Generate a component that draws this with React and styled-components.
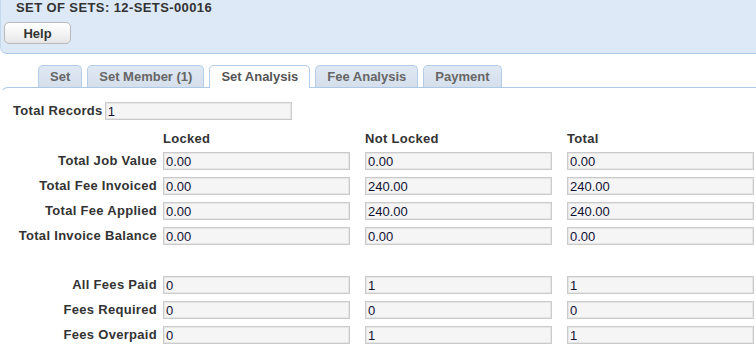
import React from "react";
import styled, { createGlobalStyle } from "styled-components";

const GlobalStyle = createGlobalStyle`
  html, body {
    margin: 0;
    padding: 0;
    background: #ffffff;
    font-family: "Liberation Sans", Arial, sans-serif;
  }
`;

const Header = styled.div`
  background-color: #dde9f6;
  border-bottom: 1px solid #adc9e7;
  border-left: 1px solid #c4d8ee;
  border-bottom-left-radius: 7px;
  padding: 0 0 9px 3px;
`;

const Title = styled.div`
  font-size: 13px;
  font-weight: bold;
  line-height: 16px;
  letter-spacing: 0.4px;
  color: #333;
  padding-left: 12px;
`;

const HelpButton = styled.button`
  display: block;
  margin-top: 6px;
  width: 67px;
  height: 22px;
  padding: 0;
  border: 1px solid #b9b9b9;
  border-radius: 5px;
  background: linear-gradient(#ffffff, #f2f2f2 60%, #e6e6e6);
  font-family: "Liberation Sans", Arial, sans-serif;
  font-size: 13px;
  font-weight: bold;
  color: #333;
`;

const TabBar = styled.div`
  display: flex;
  gap: 5px;
  padding-left: 38px;
  margin-top: 11px;
`;

const Tab = styled.div`
  padding: 1px 11px 0;
  border: 1px solid #b3cde8;
  border-bottom: none;
  border-radius: 5px 5px 0 0;
  background: ${(p) => (p.$active ? "#ffffff" : "linear-gradient(#dfe8f3, #d5dfeb)")};
  font-size: 13px;
  font-weight: bold;
  line-height: 20px;
  color: ${(p) => (p.$active ? "#555" : "#666")};
  margin-bottom: ${(p) => (p.$active ? "-1px" : "0")};
  height: ${(p) => (p.$active ? "21px" : "20px")};
  position: relative;
  z-index: 1;
`;

const Panel = styled.div`
  border-top: 1px solid #adc9e7;
  border-left: 1px solid transparent;
  border-top-left-radius: 8px;
  padding-top: 14px;
`;

const RecordsRow = styled.div`
  display: flex;
  align-items: center;
  gap: 2px;
  padding-left: 12px;
`;

const Label = styled.div`
  font-size: 13px;
  font-weight: bold;
  color: #333;
  line-height: 18px;
  letter-spacing: 0.3px;
  white-space: nowrap;
  text-align: ${(p) => (p.$right ? "right" : "left")};
  padding-right: ${(p) => (p.$right ? "6px" : "0")};
`;

const Field = styled.input`
  box-sizing: border-box;
  width: 187px;
  height: 18px;
  margin: 0;
  padding: 0 2px;
  border: 1px solid #cbcbcb;
  box-shadow: inset 0 0 0 1px #e6e6e6;
  background: #f5f5f5;
  font-family: "Liberation Sans", Arial, sans-serif;
  font-size: 13px;
  color: #111133;
  outline: none;
`;

const Grid = styled.div`
  display: grid;
  grid-template-columns: 162px 202px 202px 187px;
  row-gap: 7px;
  margin-top: 11px;
`;

const ColHead = styled.div`
  font-size: 13px;
  font-weight: bold;
  color: #333;
  line-height: 16px;
  letter-spacing: 0.3px;
  margin-bottom: -2px;
`;

const Spacer = styled.div`
  grid-column: 1 / -1;
  height: 17px;
`;

const tabs = ["Set", "Set Member (1)", "Set Analysis", "Fee Analysis", "Payment"];

const rowsA = [
  ["Total Job Value", "0.00", "0.00", "0.00"],
  ["Total Fee Invoiced", "0.00", "240.00", "240.00"],
  ["Total Fee Applied", "0.00", "240.00", "240.00"],
  ["Total Invoice Balance", "0.00", "0.00", "0.00"],
];

const rowsB = [
  ["All Fees Paid", "0", "1", "1"],
  ["Fees Required", "0", "0", "0"],
  ["Fees Overpaid", "0", "1", "1"],
];

function Rows({ rows }) {
  return rows.map((r) => (
    <React.Fragment key={r[0]}>
      <Label $right>{r[0]}</Label>
      <Field readOnly value={r[1]} />
      <Field readOnly value={r[2]} />
      <Field readOnly value={r[3]} />
    </React.Fragment>
  ));
}

export default function App() {
  return (
    <>
      <GlobalStyle />
      <Header>
        <Title>SET OF SETS: 12-SETS-00016</Title>
        <HelpButton>Help</HelpButton>
      </Header>
      <TabBar>
        {tabs.map((t) => (
          <Tab key={t} $active={t === "Set Analysis"}>
            {t}
          </Tab>
        ))}
      </TabBar>
      <Panel>
        <RecordsRow>
          <Label>Total Records</Label>
          <Field readOnly value="1" />
        </RecordsRow>
        <Grid>
          <div />
          <ColHead>Locked</ColHead>
          <ColHead>Not Locked</ColHead>
          <ColHead>Total</ColHead>
          <Rows rows={rowsA} />
          <Spacer />
          <Rows rows={rowsB} />
        </Grid>
      </Panel>
    </>
  );
}
